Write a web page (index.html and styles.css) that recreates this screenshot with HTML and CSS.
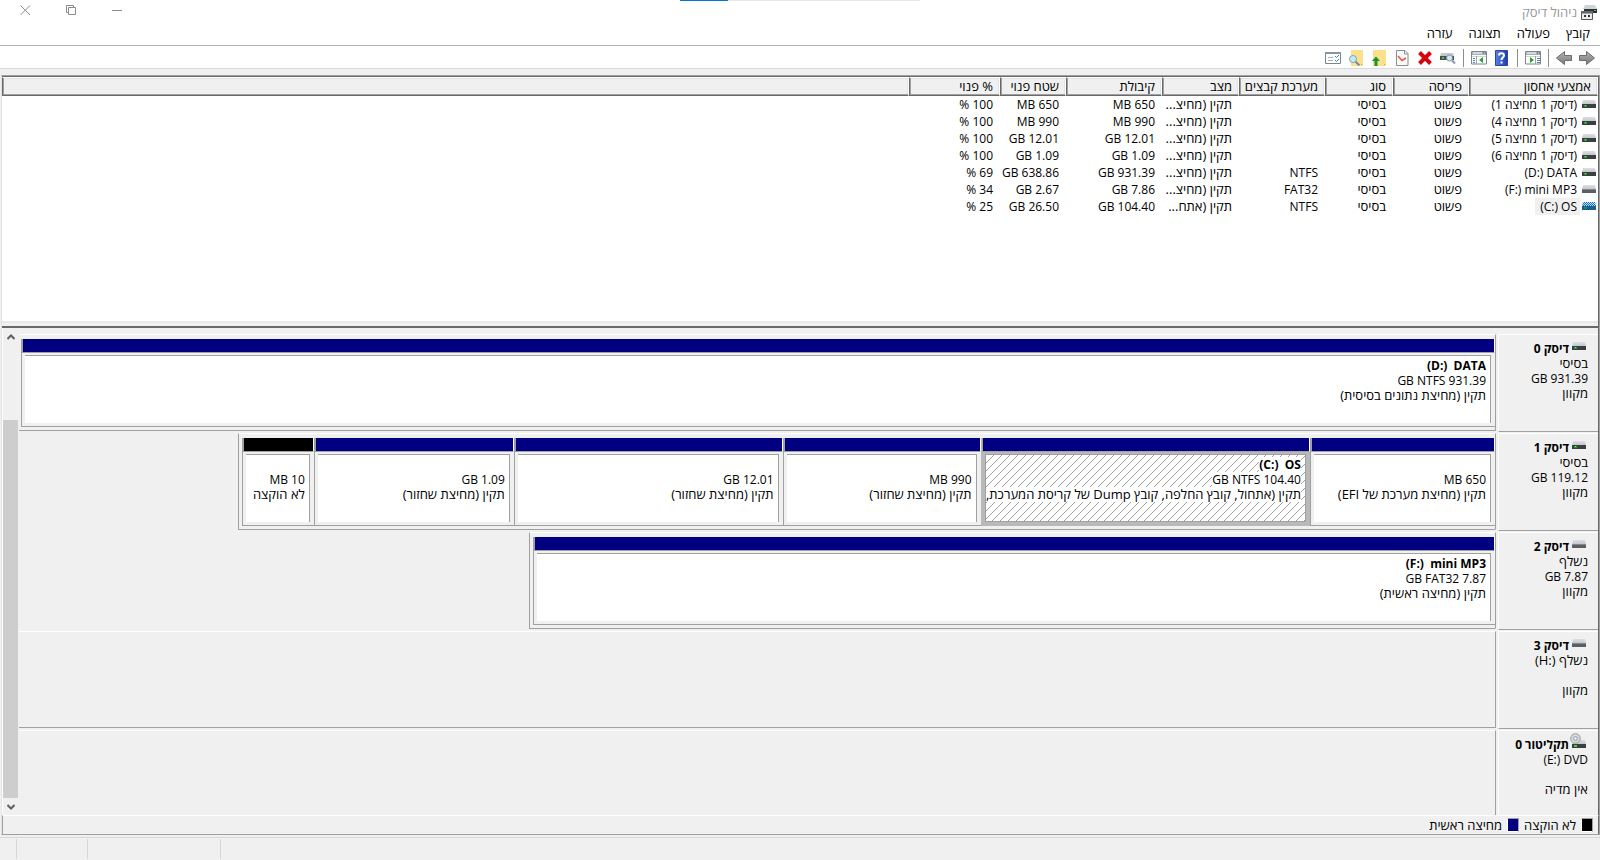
FILE: index.html
```html
<!DOCTYPE html>
<html lang="he" dir="rtl">
<head>
<meta charset="utf-8">
<title>ניהול דיסק</title>
<link rel="stylesheet" href="styles.css">
</head>
<body>
<svg class="defs" aria-hidden="true">
  <defs>
    <linearGradient id="lid" x1="0" y1="0" x2="0" y2="1"><stop offset="0" stop-color="#dcdfe3"/><stop offset="1" stop-color="#c4c7cb"/></linearGradient>
    <linearGradient id="arrow" x1="0" y1="0" x2="0" y2="1"><stop offset="0" stop-color="#b4b4b4"/><stop offset="1" stop-color="#7a7a7a"/></linearGradient>
    <linearGradient id="help" x1="0" y1="0" x2="1" y2="0"><stop offset="0" stop-color="#5b80e6"/><stop offset="1" stop-color="#1a3cae"/></linearGradient>
    <pattern id="dots" width="2" height="2" patternUnits="userSpaceOnUse"><path d="M0 0h1v1H0zM1 1h1v1H1z" fill="#0078d7"/></pattern>
    <symbol id="drive" viewBox="0 0 14 9"><path d="M1 0h12l1 4H0z" fill="url(#lid)"/><rect y="4" width="14" height="4" fill="#3c3f42"/><rect x="2" y="5" width="3" height="2" fill="#1f9a2a"/><rect x="3" y="5" width="1" height="1" fill="#4dff5c"/></symbol>
    <symbol id="removable" viewBox="0 0 14 9"><path d="M1 0h12l1 4H0z" fill="url(#lid)"/><rect y="4" width="14" height="4" fill="#5c5e60"/><rect y="4" width="14" height="1" fill="#85878a"/></symbol>
    <symbol id="drive-selected" viewBox="0 0 14 9"><use href="#drive" width="14" height="9"/><path d="M1 0h12l1 4v4H0V4z" fill="url(#dots)"/></symbol>
    <symbol id="cd" viewBox="0 0 16 16"><path d="M4 7h11l1 4H2z" fill="url(#lid)"/><rect x="2" y="11" width="14" height="4" fill="#3c3f42"/><rect x="4" y="12" width="3" height="2" fill="#35d344"/><circle cx="5.500" cy="5.500" r="4.800" fill="#d5dadb" stroke="#969c9c"/><circle cx="5.500" cy="5.500" r="1.800" fill="#fff" stroke="#8b9191"/></symbol>
    <symbol id="forward" viewBox="0 0 16 14"><path d="M.5 4.500h7v-4l8 6.500-8 6.500v-4h-7z" fill="url(#arrow)" stroke="#6b6b6b"/></symbol>
    <symbol id="pane" viewBox="0 0 16 14"><path d="M.5 .5h15v12.500H.5z" fill="#fff" stroke="#7b858d"/><path d="M1 1h14v3H1z" fill="#a8b1b8"/><path d="M2 2h9" stroke="#fff"/><path d="M12 2h1M14 2h1" stroke="#51606c"/><path d="M1 5.500h14" stroke="#cfd5da"/></symbol>
  </defs>
</svg>

<header class="titlebar">
  <div class="progress-track"><span class="progress-value"></span></div>
  <svg class="app-icon" viewBox="0 0 16 15" aria-hidden="true"><path d="M4 0h10l2 4H2z" fill="#cfd3d7"/><path d="M3 4h13v4H3z" fill="#2f3235"/><path d="M13 5h2v1h-2z" fill="#35d344"/><path d="M.5 8h11v6.500H.5z" fill="#ececec" stroke="#55585b"/><path d="M0 6h12v2H0z" fill="#65686b"/><path d="M3 10h2v2H3zM7 10h2v2H7z" fill="#303336"/></svg>
  <h1 class="title">ניהול דיסק</h1>
  <div class="window-controls">
    <button class="window-button" aria-label="מזער"><svg viewBox="0 0 11 11"><path d="M0 5.500h10"/></svg></button>
    <button class="window-button" aria-label="שחזר"><svg viewBox="0 0 11 11"><path d="M2.500 2.500h7v7h-7zM.5 7.500v-7h7v2M.5 7.500h2"/></svg></button>
    <button class="window-button" aria-label="סגור"><svg viewBox="0 0 11 11"><path d="M.5 .5l9.500 9.500M10 .5l-9.500 9.500"/></svg></button>
  </div>
</header>

<nav class="menubar">
  <button class="menu-item">קובץ</button>
  <button class="menu-item">פעולה</button>
  <button class="menu-item">תצוגה</button>
  <button class="menu-item">עזרה</button>
</nav>

<div class="toolbar" role="toolbar">
  <button class="tool" aria-label="קדימה"><svg class="tool-icon"><use href="#forward"/></svg></button>
  <button class="tool" aria-label="אחורה"><svg class="tool-icon flipped"><use href="#forward"/></svg></button>
  <span class="tool-separator"></span>
  <button class="tool" aria-label="הצג עץ"><svg class="tool-icon" viewBox="0 0 16 14"><use href="#pane" width="16" height="14"/><path d="M10.500 5v8" stroke="#9ba4ab"/><path d="M12 7.500h3M12 9.500h3M12 11.500h3" stroke="#4b81b8"/><path d="M5 6l4 3-4 3z" fill="#28a428"/></svg></button>
  <span class="tool-separator"></span>
  <button class="tool" aria-label="עזרה"><svg class="tool-icon tall" viewBox="0 0 16 16"><path d="M1.500 .5h12v15h-12z" fill="url(#help)" stroke="#2b4699"/><path d="M5 5.500c0-3 5-3 5 0C10 7.500 7.500 7.500 7.500 10M7.500 11.500v2" fill="none" stroke="#fff" stroke-width="2"/></svg></button>
  <button class="tool" aria-label="חלונית פעולות"><svg class="tool-icon" viewBox="0 0 16 14"><use href="#pane" width="16" height="14"/><path d="M5.500 5v8" stroke="#9ba4ab"/><path d="M2 7.500h2M2 9.500h2M2 11.500h2" stroke="#4b81b8"/><path d="M12 6l-4 3 4 3z" fill="#28a428"/></svg></button>
  <span class="tool-separator"></span>
  <button class="tool" aria-label="סרוק מחדש"><svg class="tool-icon" viewBox="0 0 16 14"><path d="M1 2h12l1 3H0z" fill="#c4c8cc"/><path d="M0 5h14v4H0z" fill="#4b4e51"/><path d="M2 6h2v2H2z" fill="#35d344"/><path d="M12 9.500l3 3" stroke="#8b97a3" stroke-width="2"/><circle cx="9.500" cy="7" r="3" fill="#d4e9f6" stroke="#7c96a9"/></svg></button>
  <button class="tool" aria-label="מחק"><svg class="tool-icon" viewBox="0 0 16 14"><path d="M2.500 1.500l11 11M13.500 1.500l-11 11" stroke="#d3060d" stroke-width="4"/></svg></button>
  <button class="tool" aria-label="מאפיינים"><svg class="tool-icon tall" viewBox="0 0 16 16"><path d="M2.500 .5H11l3 3v12H2.500z" fill="#fbfbfb" stroke="#8c8c8c"/><path d="M10.500 .5v3.500H14" fill="none" stroke="#8c8c8c"/><path d="M4 6l4 4.500L12 8" fill="none" stroke="#ee5a32" stroke-width="1.600"/></svg></button>
  <button class="tool" aria-label="למעלה"><svg class="tool-icon tall" viewBox="0 0 16 16"><path d="M2 0h13v14l-2 2H2z" fill="#fce08b"/><path d="M13 16v-2h2z" fill="#d8ae45"/><path d="M1 11l4-4.500L9 11H6.500v5h-3v-5z" fill="#18962a"/></svg></button>
  <button class="tool" aria-label="חיפוש"><svg class="tool-icon tall" viewBox="0 0 16 16"><path d="M3 0h12v14l-2 2H3z" fill="#fce08b"/><path d="M13 16v-2h2z" fill="#d8ae45"/><path d="M7.500 11.500l4 4" stroke="#7c8b98" stroke-width="2"/><circle cx="5" cy="9" r="3.500" fill="#cbe8f7" stroke="#7ba4bf"/></svg></button>
  <button class="tool" aria-label="רשימת משימות"><svg class="tool-icon" viewBox="0 0 16 14"><path d="M.5 1.500h15v11H.5z" fill="#fff" stroke="#7b858d"/><path d="M0 2h16" stroke="#8a949c" stroke-width="2"/><path d="M3 6.500h5M3 9.500h5" stroke="#a7adb3"/><path d="M10 5l1.500 1.500L14 4M10 9l1.500 1.500L14 8" fill="none" stroke="#3a83ce"/></svg></button>
</div>

<main class="workspace">
  <section class="volume-list">
    <table class="volumes">
      <colgroup><col class="col-name"><col class="col-layout"><col class="col-type"><col class="col-fs"><col class="col-status"><col class="col-capacity"><col class="col-free"><col class="col-percent"><col></colgroup>
      <thead><tr><th>אמצעי אחסון</th><th>פריסה</th><th>סוג</th><th>מערכת קבצים</th><th>מצב</th><th>קיבולת</th><th>שטח פנוי</th><th>% פנוי</th><th></th></tr></thead>
      <tbody>
        <tr><td><span class="volume-name"><svg class="drive-icon"><use href="#drive"/></svg><span>(דיסק 1 מחיצה 1)</span></span></td><td>פשוט</td><td>בסיסי</td><td class="value"></td><td>תקין (מחיצ...</td><td class="value">650 MB</td><td class="value">650 MB</td><td class="value">100 %</td><td></td></tr>
        <tr><td><span class="volume-name"><svg class="drive-icon"><use href="#drive"/></svg><span>(דיסק 1 מחיצה 4)</span></span></td><td>פשוט</td><td>בסיסי</td><td class="value"></td><td>תקין (מחיצ...</td><td class="value">990 MB</td><td class="value">990 MB</td><td class="value">100 %</td><td></td></tr>
        <tr><td><span class="volume-name"><svg class="drive-icon"><use href="#drive"/></svg><span>(דיסק 1 מחיצה 5)</span></span></td><td>פשוט</td><td>בסיסי</td><td class="value"></td><td>תקין (מחיצ...</td><td class="value">12.01 GB</td><td class="value">12.01 GB</td><td class="value">100 %</td><td></td></tr>
        <tr><td><span class="volume-name"><svg class="drive-icon"><use href="#drive"/></svg><span>(דיסק 1 מחיצה 6)</span></span></td><td>פשוט</td><td>בסיסי</td><td class="value"></td><td>תקין (מחיצ...</td><td class="value">1.09 GB</td><td class="value">1.09 GB</td><td class="value">100 %</td><td></td></tr>
        <tr><td><span class="volume-name"><svg class="drive-icon"><use href="#drive"/></svg><span><bdi>DATA</bdi> <bdi dir="ltr">(D:)</bdi></span></span></td><td>פשוט</td><td>בסיסי</td><td class="value">NTFS</td><td>תקין (מחיצ...</td><td class="value">931.39 GB</td><td class="value">638.86 GB</td><td class="value">69 %</td><td></td></tr>
        <tr><td><span class="volume-name"><svg class="drive-icon"><use href="#removable"/></svg><span><bdi>mini MP3</bdi> <bdi dir="ltr">(F:)</bdi></span></span></td><td>פשוט</td><td>בסיסי</td><td class="value">FAT32</td><td>תקין (מחיצ...</td><td class="value">7.86 GB</td><td class="value">2.67 GB</td><td class="value">34 %</td><td></td></tr>
        <tr><td><span class="volume-name"><svg class="drive-icon"><use href="#drive-selected"/></svg><span class="selected"><bdi>OS</bdi> <bdi dir="ltr">(C:)</bdi></span></span></td><td>פשוט</td><td>בסיסי</td><td class="value">NTFS</td><td>תקין (אתח...</td><td class="value">104.40 GB</td><td class="value">26.50 GB</td><td class="value">25 %</td><td></td></tr>
      </tbody>
    </table>
    <div class="splitter"></div>
  </section>

  <section class="disk-view">
    <div class="disks">
      <article class="disk">
        <div class="disk-info"><h2 class="disk-name"><svg class="drive-icon"><use href="#drive"/></svg>דיסק 0</h2><p>בסיסי</p><p class="value">931.39 GB</p><p>מקוון</p></div>
        <div class="disk-map"><div class="partitions full">
          <div class="partition"><div class="bar"></div><div class="body"><p class="label"><bdi>DATA</bdi>&nbsp; <bdi dir="ltr">(D:)</bdi></p><p class="value">931.39 GB NTFS</p><p>תקין (מחיצת נתונים בסיסית)</p></div></div>
        </div></div>
      </article>
      <article class="disk">
        <div class="disk-info"><h2 class="disk-name"><svg class="drive-icon"><use href="#drive"/></svg>דיסק 1</h2><p>בסיסי</p><p class="value">119.12 GB</p><p>מקוון</p></div>
        <div class="disk-map"><div class="partitions" style="width:85.150%">
          <div class="partition" style="flex-grow:185"><div class="bar"></div><div class="body"><p></p><p class="value">650 MB</p><p>תקין (מחיצת מערכת של EFI)</p></div></div>
          <div class="partition active" style="flex-grow:330"><div class="bar"></div><div class="body"><p class="label"><span><bdi>OS</bdi>&nbsp; <bdi dir="ltr">(C:)</bdi></span></p><p class="value"><span>104.40 GB NTFS</span></p><p><span>תקין (אתחול, קובץ החלפה, קובץ Dump של קריסת המערכת,</span></p></div></div>
          <div class="partition" style="flex-grow:198"><div class="bar"></div><div class="body"><p></p><p class="value">990 MB</p><p>תקין (מחיצת שחזור)</p></div></div>
          <div class="partition" style="flex-grow:269"><div class="bar"></div><div class="body"><p></p><p class="value">12.01 GB</p><p>תקין (מחיצת שחזור)</p></div></div>
          <div class="partition" style="flex-grow:200"><div class="bar"></div><div class="body"><p></p><p class="value">1.09 GB</p><p>תקין (מחיצת שחזור)</p></div></div>
          <div class="partition unallocated" style="flex-grow:71"><div class="bar"></div><div class="body"><p></p><p class="value">10 MB</p><p>לא הוקצה</p></div></div>
        </div></div>
      </article>
      <article class="disk">
        <div class="disk-info"><h2 class="disk-name"><svg class="drive-icon"><use href="#removable"/></svg>דיסק 2</h2><p>נשלף</p><p class="value">7.87 GB</p><p>מקוון</p></div>
        <div class="disk-map"><div class="partitions" style="width:65.450%">
          <div class="partition"><div class="bar"></div><div class="body"><p class="label"><bdi>mini MP3</bdi>&nbsp; <bdi dir="ltr">(F:)</bdi></p><p class="value">7.87 GB FAT32</p><p>תקין (מחיצה ראשית)</p></div></div>
        </div></div>
      </article>
      <article class="disk">
        <div class="disk-info"><h2 class="disk-name"><svg class="drive-icon"><use href="#removable"/></svg>דיסק 3</h2><p>נשלף <bdi dir="ltr">(H:)</bdi></p><p></p><p>מקוון</p></div>
        <div class="disk-map empty"></div>
      </article>
      <article class="disk">
        <div class="disk-info"><h2 class="disk-name"><svg class="cd-icon"><use href="#cd"/></svg>תקליטור 0</h2><p class="value"><bdi>DVD</bdi> <bdi dir="ltr">(E:)</bdi></p><p></p><p>אין מדיה</p></div>
        <div class="disk-map empty"></div>
      </article>
    </div>
    <div class="scrollbar">
      <button class="scroll-button" aria-label="גלול למעלה"><svg viewBox="0 0 8 6"><path d="M.5 5L4 1.500 7.500 5"/></svg></button>
      <div class="scroll-track"><div class="scroll-thumb"></div></div>
      <button class="scroll-button" aria-label="גלול למטה"><svg viewBox="0 0 8 6"><path d="M.5 1L4 4.500 7.500 1"/></svg></button>
    </div>
  </section>

  <footer class="legend">
    <span class="legend-item"><i class="swatch black"></i>לא הוקצה</span>
    <span class="legend-item"><i class="swatch navy"></i>מחיצה ראשית</span>
  </footer>
</main>

<footer class="statusbar"><span class="status-main"></span><span class="status-wide"></span><span class="status-mid"></span><span class="status-end"></span></footer>
</body>
</html>
```
FILE: styles.css
```css
* { box-sizing: border-box; }

body {
  margin: 0;
  height: 100vh;
  display: flex;
  flex-direction: column;
  overflow: hidden;
  background: #f0f0f0;
  color: #000;
  font: 13px/15px "Open Sans", "Noto Sans", "Liberation Sans", sans-serif;
}

h1, h2, p { margin: 0; font-size: inherit; font-weight: normal; }
button { padding: 0; border: 0; background: none; color: inherit; font: inherit; }
svg { display: block; flex: none; }
.defs { position: absolute; width: 0; height: 0; }
.value { font-size: 12px; }

.titlebar {
  position: relative;
  display: flex;
  align-items: center;
  gap: 4px;
  height: 24px;
  padding-right: 3px;
  background: #fff;
}
.progress-track {
  position: absolute;
  top: 0;
  left: 42.5%;
  width: 15%;
  height: 1px;
  background: #e6e6e6;
}
.progress-value { display: block; width: 20%; height: 1px; margin-right: auto; background: #0078d7; }
.app-icon { width: 16px; height: 15px; }
.title { color: #999; }
.window-controls { display: flex; align-self: flex-start; margin-right: auto; padding-left: 2px; }
.window-button { display: flex; align-items: center; justify-content: center; width: 46px; height: 21px; }
.window-button svg { width: 11px; height: 11px; fill: none; stroke: #8c8c8c; }

.menubar {
  display: flex;
  gap: 16px;
  height: 22px;
  padding: 0 10px 2px;
  background: #fff;
  border-bottom: 1px solid #b2b2b6;
}

.toolbar {
  display: flex;
  align-items: center;
  height: 23px;
  padding: 2px 2px 0 0;
  background: #fff;
  border-bottom: 1px solid #d9d9d9;
}
.tool { display: flex; align-items: center; justify-content: center; width: 23px; height: 20px; }
.tool-icon { width: 16px; height: 14px; }
.tool-icon.tall { height: 16px; }
.flipped { transform: scaleX(-1); }
.tool-separator { width: 8px; height: 18px; background: linear-gradient(#8d8d8d, #8d8d8d) center / 1px 100% no-repeat; }

.workspace {
  flex: 1;
  min-height: 0;
  display: flex;
  flex-direction: column;
  margin: 6px 0 0 1px;
  border: 1px solid #a0a0a0;
  border-left-color: #e3e3e3;
}

.volume-list {
  display: flex;
  flex-direction: column;
  height: 252px;
  background: #fff;
  border-top: 1px solid #696969;
  border-right: 1px solid #696969;
}
.volumes { width: 100%; table-layout: fixed; border-collapse: separate; border-spacing: 0; }
.volumes th, .volumes td { height: 17px; padding: 0 7px; text-align: right; white-space: nowrap; font-weight: normal; }
.volumes th {
  height: 19px;
  padding: 0 6px;
  background: #f0f0f0;
  border: 1px solid #fff;
  border-left-color: #696969;
  border-bottom-color: #696969;
  box-shadow: inset 1px -1px 0 #a0a0a0, inset -1px 1px 0 #e3e3e3;
}
.volumes td { padding-left: 0; }
.volumes td:first-child { padding-right: 2px; font-size: 12px; }
.col-name { width: 129px; }
.col-layout { width: 76px; }
.col-type { width: 68px; }
.col-fs { width: 86px; }
.col-status { width: 77px; }
.col-capacity { width: 96px; }
.col-free { width: 66px; }
.col-percent { width: 91px; }
.volume-name { display: flex; align-items: center; gap: 2px; }
.volume-name > span { padding: 0 3px; line-height: 17px; }
.volume-name .selected { padding: 0 3px 0 5px; background: #f0f0f0; }
.drive-icon { width: 14px; height: 9px; }
.cd-icon { width: 16px; height: 16px; margin: -7px 0 0 -2px; }
.splitter { height: 7px; margin-top: auto; background: #f0f0f0; border-top: 2px solid #e9e9e9; border-bottom: 2px solid #696969; }

.disk-view { flex: 1; min-height: 0; display: flex; border-right: 1px solid #696969; padding-top: 6px; }
.disks { flex: 1; min-width: 0; overflow: hidden; }
.disk { display: flex; height: 99px; }
.disk-info {
  width: 100px;
  height: 98px;
  padding: 6px 10px 0 0;
  border-top: 1px solid #fff;
  border-left: 1px solid #fff;
  border-bottom: 1px solid #a0a0a0;
}
.disk-info p { height: 15px; }
.disk-name { display: flex; align-items: center; gap: 3px; height: 15px; padding-right: 2px; font-size: 12px; font-weight: bold; }
.disk-name .drive-icon { margin-bottom: 4px; }
.disk-map { flex: 1; min-width: 0; height: 97px; margin-right: 2px; border-right: 1px solid #a0a0a0; border-bottom: 1px solid #a0a0a0; border-top: 1px solid #fff; }
.disk:nth-child(2) .disk-map, .disk:nth-child(3) .disk-map { border-bottom-color: transparent; border-top-color: transparent; }
.partitions { display: flex; height: 97px; margin-top: -1px; padding: 4px 0 3px 3px; border: 1px solid #a0a0a0; border-right: 0; border-top-color: #fff; }
.partitions.full { width: 100%; border-left: 0; padding-left: 2px; }
.partition { flex: 1 1 0; min-width: 0; display: flex; flex-direction: column; border-left: 1px solid #a0a0a0; border-bottom: 1px solid #a0a0a0; }
.bar { height: 14px; background: #000080; border-bottom: 1px solid #a0a0a0; border-right: 1px solid #fff; border-left: 1px solid #a0a0a0; }
.unallocated .bar { background: #000; }
.body {
  flex: 1;
  margin: 2px 4px 3px 3px;
  padding: 2px 4px 0;
  overflow: hidden;
  background: #fff;
  border-top: 1px solid #a0a0a0;
  border-right: 1px solid #a0a0a0;
}
.body p { height: 15px; white-space: nowrap; }
.body .label { font-size: 12px; font-weight: bold; }
.active { background: #b9b9b9; border-color: #b9b9b9; }
.active .body {
  padding: 2px 4px 0 0;
  border: 1px solid #a0a0a0;
  background: linear-gradient(135deg, #fff 46%, #a0a0a0 46% 54%, #fff 54%) 0 0 / 8px 8px;
}
.active .body span { display: inline-block; background: #fff; }

.scrollbar { width: 17px; display: flex; flex-direction: column; margin-top: -6px; border-left: 1px solid #fff; padding-right: 1px; }
.scroll-button { display: flex; align-items: center; justify-content: center; height: 17px; }
.scroll-button svg { width: 8px; height: 6px; fill: none; stroke: #606060; stroke-width: 2; }
.scroll-track { flex: 1; display: flex; flex-direction: column; justify-content: flex-end; }
.scroll-thumb { height: 83.5%; background: #cdcdcd; }

.legend {
  display: flex;
  align-items: center;
  gap: 5px;
  height: 19px;
  padding-right: 5px;
  border-top: 1px solid #fff;
  border-right: 1px solid #696969;
  border-left: 1px solid #a0a0a0;
}
.legend-item { display: flex; align-items: center; gap: 5px; }
.swatch { width: 12px; height: 14px; border: 1px solid #a0a0a0; border-left-color: #fff; border-bottom-color: #fff; }
.black { background: #000; }
.navy { background: #000080; }

.statusbar { display: flex; height: 23px; margin-top: 2px; padding: 1px 0; border-top: 1px solid #d7d7d7; }
.status-main { flex: 1; }
.status-wide, .status-mid, .status-end { border-right: 1px solid #d7d7d7; }
.status-wide { width: 133px; }
.status-mid { width: 71px; }
.status-end { width: 17px; }
```
